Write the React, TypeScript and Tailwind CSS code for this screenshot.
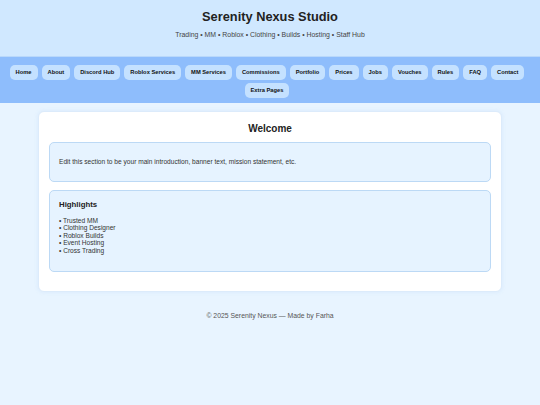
import React from "react";

const navItems = [
  "Home",
  "About",
  "Discord Hub",
  "Roblox Services",
  "MM Services",
  "Commissions",
  "Portfolio",
  "Prices",
  "Jobs",
  "Vouches",
  "Rules",
  "FAQ",
  "Contact",
  "Extra Pages",
];

const highlights = [
  "Trusted MM",
  "Clothing Designer",
  "Roblox Builds",
  "Event Hosting",
  "Cross Trading",
];

export default function App() {
  return (
    <div
      className="min-h-[405px] bg-[#e8f4ff] text-[#222]"
      style={{ fontFamily: '"Liberation Sans", Arial, sans-serif' }}
    >
      <header className="h-[56px] bg-[#d0e8ff] flex flex-col items-center pt-[9px]">
        <h1 className="text-[12.8px] leading-[16px] font-bold text-[#222]">
          Serenity Nexus Studio
        </h1>
        <p className="mt-[6px] text-[6.9px] leading-[8px] text-[#444]">
          Trading • MM • Roblox • Clothing • Builds • Hosting • Staff Hub
        </p>
      </header>
      <nav className="bg-[#8ebdfc] flex flex-wrap justify-center gap-x-[4px] gap-y-[3px] pt-[8px] pb-[5px] pl-0 pr-[6px] border-t border-[#b9d8fb]">
        {navItems.map((item) => (
          <span
            key={item}
            className="h-[15px] flex items-center px-[6px] rounded-[5px] bg-[#c4e1ff] text-[5.76px] font-bold text-[#111]"
          >
            {item}
          </span>
        ))}
      </nav>
      <main className="pt-[8px] px-[38px]">
        <section className="bg-white rounded-[6px] border border-[#dcebfb] shadow-[0_0_4px_rgba(120,170,230,0.15)] pt-[11px] px-[10px] pb-[19px] flex flex-col">
          <h2 className="text-center text-[10px] leading-[12px] font-bold text-[#222] mb-[7px]">
            Welcome
          </h2>
          <div className="flex flex-col gap-[8px]">
            <div className="bg-[#e6f3ff] border border-[#bcd9f5] rounded-[5px] px-[9px] py-[15px]">
              <p className="text-[6.6px] leading-[7.5px] text-[#333]">
                Edit this section to be your main introduction, banner text, mission statement, etc.
              </p>
            </div>
            <div className="bg-[#e6f3ff] border border-[#bcd9f5] rounded-[5px] px-[9px] pt-[9px] pb-[17px]">
              <h3 className="text-[7.8px] leading-[9px] font-bold text-[#222]">Highlights</h3>
              <ul className="mt-[8px] text-[6.6px] leading-[7.5px] text-[#333]">
                {highlights.map((h) => (
                  <li key={h}>• {h}</li>
                ))}
              </ul>
            </div>
          </div>
        </section>
        <footer className="text-center text-[6.85px] leading-[8px] text-[#555] pt-[20px]">
          © 2025 Serenity Nexus — Made by Farha
        </footer>
      </main>
    </div>
  );
}
